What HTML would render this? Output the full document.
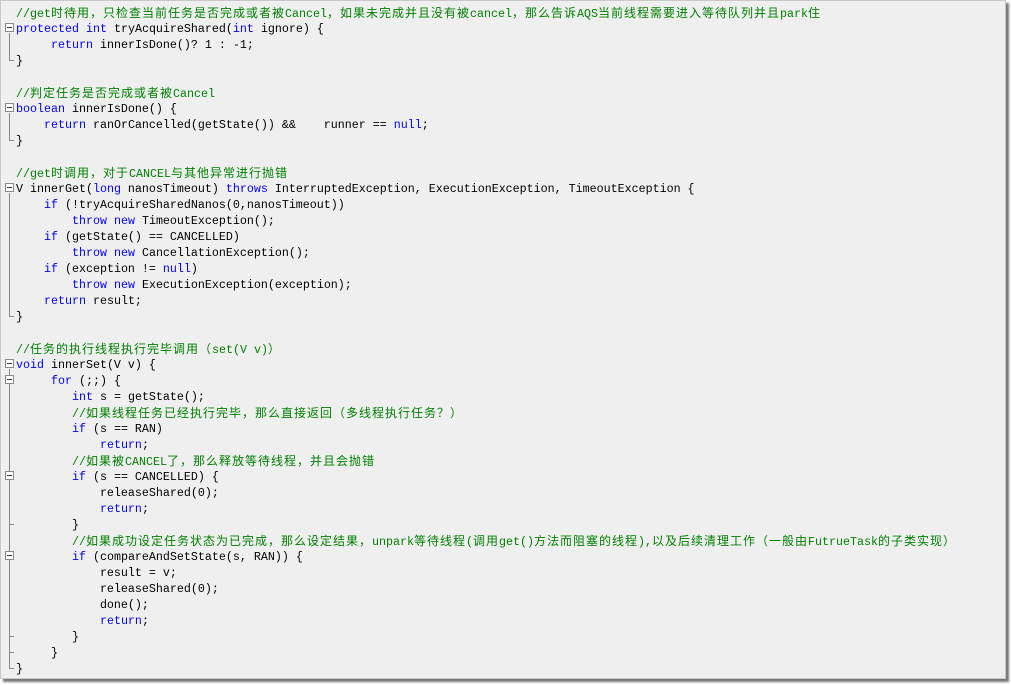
<!DOCTYPE html>
<html><head><meta charset="utf-8"><style>
body{margin:0;background:#fff;width:1011px;height:685px;overflow:hidden;position:relative}
.box{position:absolute;left:0;top:0;width:1004px;height:677px;background:#efefef;border:1px solid #c8c8c8;box-shadow:3px 3px 2px #777}
.l{position:absolute;left:16px;height:16px;line-height:16px;white-space:pre;font-family:"Liberation Mono",monospace;font-size:11.67px;color:#000;margin-top:1px}
.c{font-family:"Noto Sans CJK SC",sans-serif;font-size:12px;letter-spacing:1px}
.k{color:#0000ff}.g{color:#008000}
.fb{position:absolute;left:5px;width:7px;height:7px;border:1px solid #888;background:#fff}
.fb:after{content:"";position:absolute;left:1px;top:3px;width:5px;height:1px;background:#333}
.v{position:absolute;left:9px;width:1px;background:#888}
.t{position:absolute;left:9px;width:5px;height:1px;background:#888}
</style></head><body><div class="box"></div>
<div class="l g" style="top:4px">//get<span class="c">时待用，只检查当前任务是否完成或者被</span>Cancel<span class="c">，如果未完成并且没有被</span>cancel<span class="c">，那么告诉</span>AQS<span class="c">当前线程需要进入等待队列并且</span>park<span class="c">住</span></div>
<div class="l" style="top:20px"><span class="k">protected</span> <span class="k">int</span> tryAcquireShared(<span class="k">int</span> ignore) {</div>
<div class="l" style="top:36px">     <span class="k">return</span> innerIsDone()? 1 : -1;</div>
<div class="l" style="top:52px">}</div>
<div class="l g" style="top:84px">//<span class="c">判定任务是否完成或者被</span>Cancel</div>
<div class="l" style="top:100px"><span class="k">boolean</span> innerIsDone() {</div>
<div class="l" style="top:116px">    <span class="k">return</span> ranOrCancelled(getState()) &amp;&amp;    runner == <span class="k">null</span>;</div>
<div class="l" style="top:132px">}</div>
<div class="l g" style="top:164px">//get<span class="c">时调用，对于</span>CANCEL<span class="c">与其他异常进行抛错</span></div>
<div class="l" style="top:180px">V innerGet(<span class="k">long</span> nanosTimeout) <span class="k">throws</span> InterruptedException, ExecutionException, TimeoutException {</div>
<div class="l" style="top:196px">    <span class="k">if</span> (!tryAcquireSharedNanos(0,nanosTimeout))</div>
<div class="l" style="top:212px">        <span class="k">throw</span> <span class="k">new</span> TimeoutException();</div>
<div class="l" style="top:228px">    <span class="k">if</span> (getState() == CANCELLED)</div>
<div class="l" style="top:244px">        <span class="k">throw</span> <span class="k">new</span> CancellationException();</div>
<div class="l" style="top:260px">    <span class="k">if</span> (exception != <span class="k">null</span>)</div>
<div class="l" style="top:276px">        <span class="k">throw</span> <span class="k">new</span> ExecutionException(exception);</div>
<div class="l" style="top:292px">    <span class="k">return</span> result;</div>
<div class="l" style="top:308px">}</div>
<div class="l g" style="top:340px">//<span class="c">任务的执行线程执行完毕调用（</span>set(V v)<span class="c">）</span></div>
<div class="l" style="top:356px"><span class="k">void</span> innerSet(V v) {</div>
<div class="l" style="top:372px">     <span class="k">for</span> (;;) {</div>
<div class="l" style="top:388px">        <span class="k">int</span> s = getState();</div>
<div class="l g" style="top:404px">        //<span class="c">如果线程任务已经执行完毕，那么直接返回（多线程执行任务？）</span></div>
<div class="l" style="top:420px">        <span class="k">if</span> (s == RAN)</div>
<div class="l" style="top:436px">            <span class="k">return</span>;</div>
<div class="l g" style="top:452px">        //<span class="c">如果被</span>CANCEL<span class="c">了，那么释放等待线程，并且会抛错</span></div>
<div class="l" style="top:468px">        <span class="k">if</span> (s == CANCELLED) {</div>
<div class="l" style="top:484px">            releaseShared(0);</div>
<div class="l" style="top:500px">            <span class="k">return</span>;</div>
<div class="l" style="top:516px">        }</div>
<div class="l g" style="top:532px">        //<span class="c">如果成功设定任务状态为已完成，那么设定结果，</span>unpark<span class="c">等待线程</span>(<span class="c">调用</span>get()<span class="c">方法而阻塞的线程</span>),<span class="c">以及后续清理工作（一般由</span>FutrueTask<span class="c">的子类实现）</span></div>
<div class="l" style="top:548px">        <span class="k">if</span> (compareAndSetState(s, RAN)) {</div>
<div class="l" style="top:564px">            result = v;</div>
<div class="l" style="top:580px">            releaseShared(0);</div>
<div class="l" style="top:596px">            done();</div>
<div class="l" style="top:612px">            <span class="k">return</span>;</div>
<div class="l" style="top:628px">        }</div>
<div class="l" style="top:644px">     }</div>
<div class="l" style="top:660px">}</div>
<div class="v" style="top:33px;height:28px"></div><div class="t" style="top:60px"></div><div class="fb" style="top:23px"></div>
<div class="v" style="top:113px;height:28px"></div><div class="t" style="top:140px"></div><div class="fb" style="top:103px"></div>
<div class="v" style="top:193px;height:124px"></div><div class="t" style="top:316px"></div><div class="fb" style="top:183px"></div>
<div class="v" style="top:369px;height:300px"></div><div class="t" style="top:668px"></div><div class="fb" style="top:359px"></div>
<div class="fb" style="top:375px"></div>
<div class="fb" style="top:471px"></div><div class="t" style="top:524px"></div>
<div class="fb" style="top:551px"></div><div class="t" style="top:636px"></div>
<div class="t" style="top:652px"></div>
</body></html>
